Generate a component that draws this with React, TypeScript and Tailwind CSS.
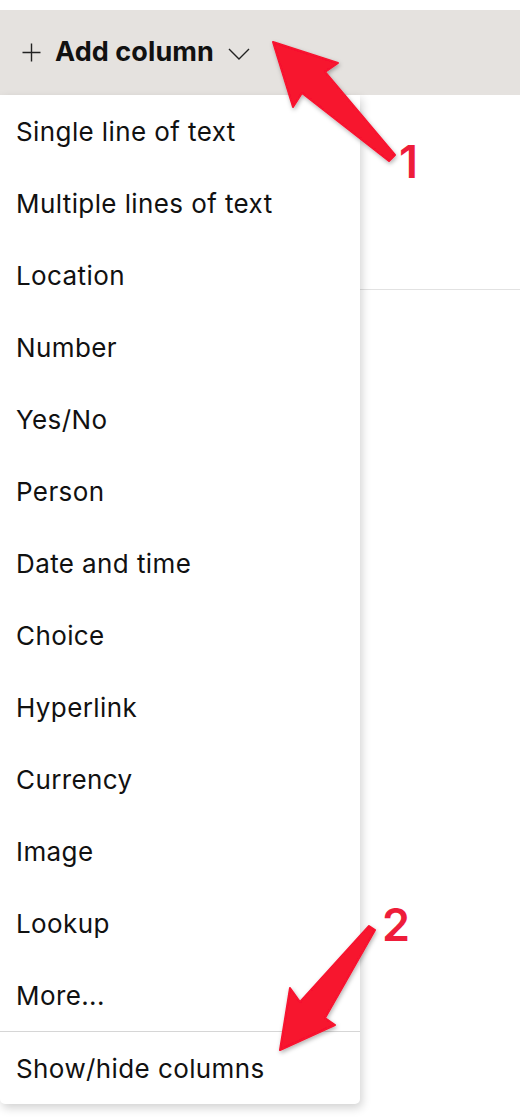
const ITEMS = [
  "Single line of text",
  "Multiple lines of text",
  "Location",
  "Number",
  "Yes/No",
  "Person",
  "Date and time",
  "Choice",
  "Hyperlink",
  "Currency",
  "Image",
  "Lookup",
  "More...",
];

const font = { fontFamily: "Inter, 'Liberation Sans', sans-serif" };

export default function App() {
  return (
    <div className="relative w-[526px] h-[1120px] bg-white overflow-hidden text-[#111]" style={font}>
      <div className="h-[10px]" />

      {/* header bar */}
      <div className="w-[520px] h-[85px] bg-[#e5e2df] flex items-center pl-[22px]">
        <svg width="19" height="19" viewBox="0 0 19 19" className="text-[#222]">
          <path d="M9.5 0.5v18M0.5 9.5h18" stroke="currentColor" strokeWidth="1.4" fill="none" />
        </svg>
        <span className="ml-[14px] text-[27px] font-bold tracking-[0.1px]">Add column</span>
        <svg width="22" height="12" viewBox="0 0 22 12" className="ml-[14px] mt-[2px] text-[#222]">
          <path d="M1 1l10 10 10-10" stroke="currentColor" strokeWidth="1.4" fill="none" />
        </svg>
      </div>

      <div className="flex">
        {/* dropdown menu */}
        <div className="w-[360px] bg-white rounded-b-[5px] shadow-[2px_4px_10px_rgba(0,0,0,0.18)] z-10">
          {ITEMS.map((label) => (
            <div key={label} className="h-[72px] flex items-center pl-[16px] text-[26px] tracking-[0.4px]">
              {label}
            </div>
          ))}
          <div className="h-[73px] border-t border-[#d6d6d6] flex items-center pl-[16px] text-[26px] tracking-[0.4px]">
            Show/hide columns
          </div>
        </div>

        {/* list area */}
        <div className="w-[160px]">
          <div className="h-[195px] border-b border-[#e2e2e2]" />
        </div>
      </div>

      {/* annotation arrows */}
      <svg className="absolute inset-0 z-20 pointer-events-none" width="526" height="1120" viewBox="0 0 526 1120">
        <defs>
          <filter id="sh" x="-20%" y="-20%" width="140%" height="140%">
            <feDropShadow dx="1" dy="2" stdDeviation="2" floodColor="#000" floodOpacity="0.3" />
          </filter>
        </defs>
        <polygon
          points="273,42 338,63 325,72 395,155 389,161 302,93 293,107"
          fill="#f7122f"
          stroke="#f7122f"
          strokeWidth="2"
          strokeLinejoin="round"
          filter="url(#sh)"
        />
        <polygon
          points="280,1050 290,988 300,1002 369,926 375,930 325,1018 335,1025"
          fill="#f7122f"
          stroke="#f7122f"
          strokeWidth="2"
          strokeLinejoin="round"
          filter="url(#sh)"
        />
      </svg>
      <span className="absolute z-20 left-[399px] top-[139px] text-[45px] font-semibold leading-none text-[#ee1d3a]">1</span>
      <span className="absolute z-20 left-[382px] top-[902px] text-[45px] font-semibold leading-none text-[#ee1d3a]">2</span>
    </div>
  );
}
